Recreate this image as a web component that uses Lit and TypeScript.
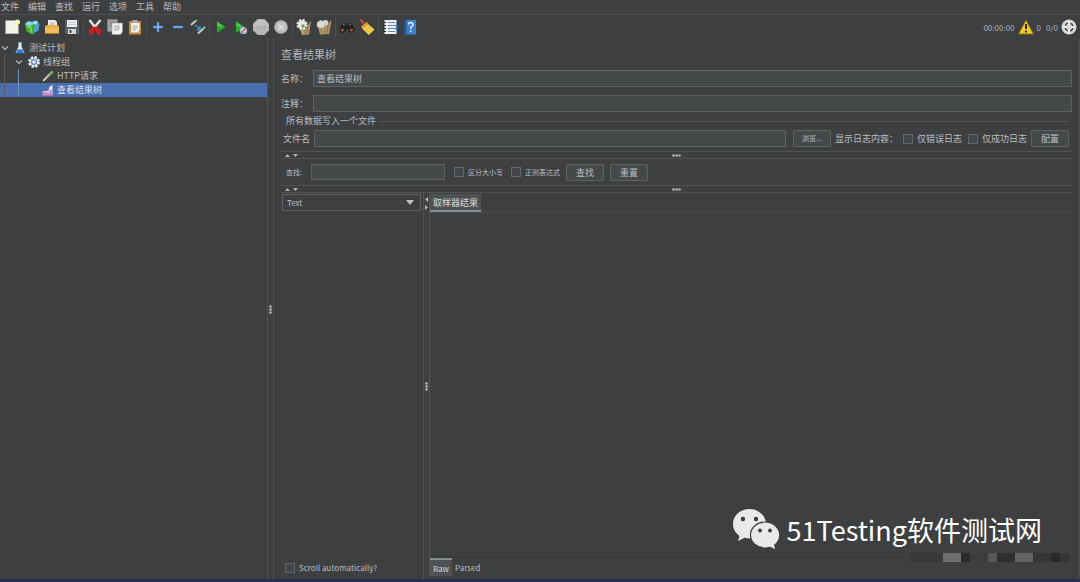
import { LitElement, html, css, svg, nothing } from "lit";
import { customElement } from "lit/decorators.js";
import { classMap } from "lit/directives/class-map.js";

const icons: Record<string, unknown> = {
  new: svg`<path d="M1.5 1.5h13v13.5h-13z" fill="#f1f2e8"/><path d="M1.5 14h13v1h-13z" fill="#b9bbae"/><circle cx="13.5" cy="3" r="2.6" fill="#f4f29a"/><circle cx="13.5" cy="3" r="1" fill="#fff"/>`,
  templates: svg`<path d="M6 3l6-1.500L15.500 5l-1 6.500L8 15.500z" fill="#4aa3dc"/><path d="M8 4q3-3.500 6.500-1L11 6z" fill="#a8def6"/><path d="M1 5.500L5 4l6 1.500-1 8.500-2 1.500-5.500-3z" fill="#43ae35"/><path d="M1 5.500q2-4 6-3l2 3-3 1.500z" fill="#8ad7ee"/><path d="M3 7l4 1.500v5" fill="none" stroke="#85dc62" stroke-width="1.500"/>`,
  open: svg`<path d="M4 1h7l2 2v6H4z" fill="#eceded"/><path d="M6 4h5M6 6h5" stroke="#aaa"/><path d="M1 7l2-1h11l1 2v6.500H1z" fill="#e9b04a"/><path d="M1 9h14v5.500H1z" fill="#f0bd5e"/><path d="M1 14h14v1H1z" fill="#b57b21"/>`,
  save: svg`<path d="M1 1h14v14H2.500L1 13.500z" fill="#5b6066"/><path d="M3 1h10v7H3z" fill="#eceeef"/><path d="M4 3.500h8M4 5.500h8" stroke="#c9ccd0"/><path d="M4 10h8v5H4z" fill="#d5d8db"/><path d="M5.500 11h2v3h-2z" fill="#44484c"/>`,
  cut: svg`<path d="M2.500 1l7 9M13.500 1L6 10" stroke="#e4e6e8" stroke-width="2.400"/><path d="M7 8.500L3 11v2.500l1.500 1L8 9l3.500 5.500 1.500-1V11L9 8.500" fill="none" stroke="#d3201b" stroke-width="2.200"/>`,
  copy: svg`<path d="M.5.500h10v12H.5z" fill="#a5a7a8" stroke="#777"/><path d="M2.500 3h6M2.500 5h4M2.500 7h3" stroke="#777"/><path d="M5 4h10.500v9l-2 2.500H5z" fill="#f3f4f2" stroke="#9a9c9a" stroke-width=".6"/><path d="M7 7h6M7 9h6M7 11h5" stroke="#a3a6a3"/>`,
  paste: svg`<path d="M2 2h12v13.500H2z" fill="#c58a35"/><path d="M4 4h8.500v9.500H4z" fill="#f4f4ef"/><path d="M5.500 1h5v3h-5z" fill="#a8adb2"/><path d="M5.500 7h5M5.500 9h5M5.500 11h3" stroke="#a1a39e"/><path d="M10 13.500l2.500-2.500v2.500z" fill="#999"/>`,
  plus: svg`<path d="M8 3v10M3 8h10" stroke="#3d79cc" stroke-width="2.600"/><path d="M8 3.500v9M3.500 8h9" stroke="#a9cdf8" stroke-width="1"/>`,
  minus: svg`<path d="M3 8h10" stroke="#3d79cc" stroke-width="2.600"/><path d="M3.500 8h9" stroke="#a9cdf8" stroke-width="1"/>`,
  toggle: svg`<path d="M1 6l5-4.500" stroke="#c8ccc8" stroke-width="2"/><path d="M5 2.500l2-1.500" stroke="#75b85f" stroke-width="2"/><path d="M8 14.500L15 8" stroke="#c8ccc8" stroke-width="2"/><path d="M13 10l2-2" stroke="#75b85f" stroke-width="2"/><path d="M5 6l5 4M10 7v3.500H7" stroke="#4a8fe0" stroke-width="1.300" fill="none"/>`,
  play: svg`<path d="M4 2l8.500 6L4 14z" fill="#2fa62f"/><path d="M4.500 3l6 4.500h-6z" fill="#55c94e"/>`,
  playTimers: svg`<path d="M3 2l9 6.500L3 14z" fill="#2fa62f"/><path d="M3.500 3l6 4.500h-6z" fill="#55c94e"/><circle cx="10.500" cy="11.500" r="3.600" fill="#e9f1fa"/><circle cx="10.500" cy="11.500" r="2.700" fill="none" stroke="#5c93cf"/><path d="M8.500 13.500l4.500-4.500" stroke="#d4452f" stroke-width="1.300"/>`,
  stop: svg`<path d="M4.700 0h6.600L16 4.700v6.600L11.300 16H4.700L0 11.300V4.700z" fill="#b5b7b7"/><path d="M5 1h6l4 4v3H1V5z" fill="#bfc1c1"/><path d="M3 8h10" stroke="#adafaf" stroke-width="2.500"/>`,
  shutdown: svg`<circle cx="8" cy="8" r="6.800" fill="#b8baba"/><circle cx="8" cy="8" r="4.500" fill="#c0c2c2"/><path d="M5.500 5.500l5 5M10.500 5.500l-5 5" stroke="#dcdddd" stroke-width="1.600"/>`,
  clear: svg`<path d="M4 10l6-1 5-7.500-1 7.500-1 6.500-7 .5z" fill="#b89a6b"/><path d="M8 9l1 6M11 8v7M13 5l-2 8" stroke="#8a6c42" stroke-width=".8"/><circle cx="6" cy="5.500" r="4.600" fill="none" stroke="#e6e8e4" stroke-width="2" stroke-dasharray="2.300 1.310"/><circle cx="6" cy="5.500" r="4.200" fill="#e6e8e4"/><circle cx="7" cy="7" r="1.700" fill="#68a64f"/>`,
  clearAll: svg`<circle cx="5" cy="5.500" r="3.600" fill="#d9dbd7" stroke="#e9e9e5" stroke-width="1.500" stroke-dasharray="2 1"/><circle cx="9.500" cy="4" r="3" fill="#cfd1cd"/><path d="M2 8l5 1 3-3 1 2 4-7 .5 1-1.500 7-1 6-9 .5z" fill="#b89a6b"/><path d="M5 10l1 5M8 9l1 6M11 8v7M13 5l-2 8" stroke="#8a6c42" stroke-width=".8"/>`,
  search: svg`<path d="M3 4h3l2 2 2-2h3l2.500 7-4 2-3-4-3.500 4-4.500-2z" fill="#232425"/><circle cx="3.500" cy="11" r="2.700" fill="#1d1e1f"/><circle cx="12.500" cy="11" r="2.700" fill="#1d1e1f"/><circle cx="3.500" cy="11" r="1.500" fill="#b25a2d"/><circle cx="12.500" cy="11" r="1.500" fill="#b25a2d"/><path d="M4 5l1.500 1M10.500 6L12 5" stroke="#9ea0a1"/>`,
  broom: svg`<path d="M1.500 0.500l3.500 4" stroke="#d6483c" stroke-width="2.200"/><path d="M2 7.500l6-4.500 2 3-6 4.500z" fill="#e0a233"/><path d="M3.500 10L9.500 5.500l6 5-5.500 5.500z" fill="#f3d14c"/><path d="M6.500 10l4.500 4M9 8l4.500 4" stroke="#d9ae30"/>`,
  functions: svg`<path d="M2.500 1h12v14h-12z" fill="#f0f3f6"/><path d="M6 3.500h7M6 6.500h8M6 9.500h8M6 12.500h7" stroke="#6583aa"/><path d="M1 3.500h3M1 6.500h3M1 9.500h3M1 12.500h3" stroke="#222"/><path d="M14.500 4v8" stroke="#3d87d8" stroke-width="1.500"/>`,
  help: svg`<path d="M2 1h12v14.500H2z" fill="#3f82cf"/><path d="M2 1h2.500v14.500H2z" fill="#24568f"/><path d="M6.500 5.500q0-2 2.200-2t2.200 2q0 1.300-1.200 2T8.700 10M8.700 11.500v1.500" fill="none" stroke="#f2f7fd" stroke-width="1.300"/>`,
  flask: svg`<path d="M6 1h4v5l4 8.500H2L6 6z" fill="#e6edf2"/><path d="M5 9.500h6l2.500 5.500h-11z" fill="#2e82d6"/><path d="M5.500 1h5" stroke="#9fb0bd" stroke-width="1.500"/>`,
  gear: svg`<circle cx="8" cy="8" r="6.600" fill="none" stroke="#edf0f3" stroke-width="2.600" stroke-dasharray="3.200 1.980"/><circle cx="8" cy="8" r="5.800" fill="#e2e8ee"/><circle cx="8" cy="8" r="3.200" fill="#e9eef4" stroke="#4f82c2" stroke-width="1.600"/>`,
  dropper: svg`<path d="M1.500 14.500L9 7.500" stroke="#e2e4e2" stroke-width="2"/><path d="M6 10l5-5" stroke="#b0b4b0" stroke-width="3"/><path d="M10 6l4.500-4" stroke="#6bb456" stroke-width="3.500"/>`,
  graph: svg`<path d="M1 15V10l5-1 2 1 2-6 4-3v14z" fill="#f1e8f2"/><path d="M1 15v-3.500l4-1.500 3 2 6-3v6z" fill="#dc82c4"/><path d="M6 9l8 3V7z" fill="#8fb4e0"/>`,
  warn: svg`<path d="M8 1L15.500 15H.5z" fill="#f3cf24" stroke="#806d18"/><path d="M8 5v5M8 11.500v2" stroke="#2d2810" stroke-width="2"/>`,
  expand: svg`<circle cx="8" cy="8" r="7.500" fill="#d7d9d9"/><circle cx="8" cy="8" r="4" fill="none" stroke="#4c4f51" stroke-width="1.500" stroke-dasharray="4.200 2.080" stroke-dashoffset="-1"/><path d="M8 2v4M8 10v4M2 8h4M10 8h4" stroke="#f6f7f7" stroke-width="1.600"/>`,
};

const icon = (name: string, size = 16) =>
  html`<svg class="icon" viewBox="0 0 16 16" width=${size} height=${size} aria-hidden="true">${icons[name]}</svg>`;

const menus = ["文件", "编辑", "查找", "运行", "选项", "工具", "帮助"];

const tools: [string, string][][] = [
  [["new", "新建"], ["templates", "模板"], ["open", "打开"], ["save", "保存"]],
  [["cut", "剪切"], ["copy", "复制"], ["paste", "粘贴"]],
  [["plus", "展开"], ["minus", "折叠"], ["toggle", "切换"]],
  [["play", "启动"], ["playTimers", "不停顿启动"], ["stop", "停止"], ["shutdown", "关闭"]],
  [["clear", "清除"], ["clearAll", "清除全部"]],
  [["search", "查找"], ["broom", "重置查找"]],
  [["functions", "函数助手"], ["help", "帮助"]],
];

const nodes = [
  { level: 0, icon: "flask", label: "测试计划", open: true, selected: false },
  { level: 1, icon: "gear", label: "线程组", open: true, selected: false },
  { level: 2, icon: "dropper", label: "HTTP请求", open: false, selected: false },
  { level: 2, icon: "graph", label: "查看结果树", open: false, selected: true },
];

const sharedStyles = css`
  * { box-sizing: border-box; }
  button, input, select { font: inherit; color: inherit; margin: 0; padding: 0; border-radius: 0; outline: none; }
  button { background: none; border: 0; white-space: nowrap; }
  .icon { display: block; flex: none; }
`;

@customElement("menu-and-tools")
class MenuAndTools extends LitElement {
  static styles = [sharedStyles, css`
    :host { display: block; }
    .menu { display: flex; gap: 9px; height: 15px; padding-left: 1px; border-bottom: 1px solid #4c4e50; }
    .menu button { line-height: 14px; }
    .bar { display: flex; align-items: center; height: 24px; padding-left: 2px; }
    .group { display: flex; }
    .group + .group { margin-left: 1px; padding-left: 1px; border-left: 1px solid #4c4e50; }
    .tool { width: 20px; height: 20px; display: grid; place-items: center; }
    .status { display: flex; align-items: center; gap: 3px; margin-left: auto; padding-right: 3px; font-size: 8px; color: #aeb0b2; }
    .counts { display: flex; gap: 5px; }
  `];

  render() {
    return html`
      <nav class="menu">${menus.map((m) => html`<button>${m}</button>`)}</nav>
      <div class="bar">
        ${tools.map((group) => html`<div class="group">
          ${group.map(([name, label]) => html`<button class="tool" aria-label=${label}>${icon(name)}</button>`)}
        </div>`)}
        <div class="status">
          <span>00:00:00</span>${icon("warn")}
          <span class="counts"><span>0</span><span>0/0</span></span>${icon("expand")}
        </div>
      </div>`;
  }
}

@customElement("plan-tree")
class PlanTree extends LitElement {
  static styles = [sharedStyles, css`
    :host { display: block; }
    .tree { list-style: none; margin: 0; padding: 2px 0 0; }
    .row { display: flex; align-items: center; height: 14px; }
    .selected { background: #4b6eaf; color: #dfe3ea; }
    .guide { flex: none; width: 14px; height: 14px; }
    .outer { background: linear-gradient(#5a5d5f, #5a5d5f) 4px 0 / 1px 100% no-repeat; }
    .inner { background: linear-gradient(#6a93b8, #6a93b8) 4px 0 / 1px 100% no-repeat; }
    .arrow { flex: none; width: 14px; padding-left: 1px; }
    .label { padding-left: 3px; line-height: 14px; }
  `];

  render() {
    return html`<ul class="tree" role="tree">
      ${nodes.map((n) => html`<li class=${classMap({ row: true, selected: n.selected })} role="treeitem" aria-level=${n.level + 1}>
        ${n.level > 0 ? html`<span class="guide outer"></span>` : nothing}
        ${n.level > 1 ? html`<span class="guide inner"></span>` : nothing}
        <span class="arrow">${n.open
          ? html`<svg class="icon" width="8" height="8" viewBox="0 0 8 8"><path d="M1 2.500l3 3 3-3" fill="none" stroke="#b5b7b9" stroke-width="1.200"/></svg>`
          : nothing}</span>
        ${icon(n.icon, 12)}<span class="label">${n.label}</span>
      </li>`)}
    </ul>`;
  }
}

@customElement("split-bar")
class SplitBar extends LitElement {
  static properties = { vertical: { type: Boolean, reflect: true }, arrows: { type: Boolean } };
  declare vertical: boolean;
  declare arrows: boolean;

  static styles = css`
    :host { display: grid; grid-template-columns: 1fr auto 1fr; align-items: center; height: 8px; border: solid #505355; border-width: 1px 0; box-sizing: border-box; }
    :host([vertical]) { grid-template: 1fr auto 1fr / 1fr; justify-items: center; align-items: start; width: 7px; height: auto; border-width: 0 1px; }
    svg { display: block; fill: #b4b6b7; }
  `;

  render() {
    const turned = this.vertical;
    const arrows = turned
      ? html`<svg width="5" height="18" viewBox="0 0 5 18"><path d="M4 4v5L1 6.500zM1 12v5l3-2.500z"/></svg>`
      : html`<svg width="18" height="4" viewBox="0 0 18 4"><path d="M4 4h5L6.500 1zM12 1h5l-2.500 3z"/></svg>`;
    const dots = turned
      ? html`<svg width="3" height="9" viewBox="0 0 3 9"><circle cx="1.500" cy="1.500" r="1.300"/><circle cx="1.500" cy="4.500" r="1.300"/><circle cx="1.500" cy="7.500" r="1.300"/></svg>`
      : html`<svg width="9" height="3" viewBox="0 0 9 3"><circle cx="1.500" cy="1.500" r="1.300"/><circle cx="4.500" cy="1.500" r="1.300"/><circle cx="7.500" cy="1.500" r="1.300"/></svg>`;
    return html`<span>${this.arrows ? arrows : nothing}</span>${dots}<span></span>`;
  }
}

@customElement("results-panel")
class ResultsPanel extends LitElement {
  static styles = [sharedStyles, css`
    :host { display: flex; flex-direction: column; min-width: 0; padding-left: 7px; border-right: 1px solid #4c4e50; }
    .title { margin: 0; padding-top: 7px; height: 31px; font-size: 11px; font-weight: 400; line-height: 17px; color: #b4b6b8; }
    .field { display: grid; grid-template-columns: 32px 1fr; align-items: center; height: 17px; margin: 0 7px 8px 0; }
    .last { margin-bottom: 0; }
    .text { width: 100%; min-width: 0; height: 17px; padding: 0 3px; border: 1px solid #5e6162; background: #45494a; }
    .file { border: 0; margin: 0 7px 0 0; padding: 0 3px 4px 2px; min-width: 0; }
    .legend { display: flex; align-items: center; gap: 3px; width: 100%; height: 18px; padding: 0 0 0 3px; line-height: 18px; }
    .legend::after { content: ""; flex: 1; height: 1px; background: #505355; }
    .line { display: flex; align-items: center; height: 17px; }
    .line .text { flex: 1; margin: 0 7px 0 4px; }
    .push { height: 17px; width: 38px; border: 1px solid #5e6162; border-radius: 1px; background: #45494a; line-height: 15px; }
    .small { font-size: 7px; }
    .logs { margin: 0 5px 0 4px; }
    .check { display: flex; align-items: center; gap: 4px; white-space: nowrap; }
    .box { appearance: none; width: 10px; height: 10px; border: 1px solid #64686a; background: #424648; }
    .box:checked { background: #4b6eaf; }
    .line .check { margin-right: 6px; }
    .line .check:last-of-type { margin-right: 4px; }
    .bar { margin-right: 7px; }
    .search { display: flex; align-items: center; height: 26px; padding: 0 5px; }
    .search .text { width: 134px; height: 16px; margin: 0 9px; }
    .search .check { margin-right: 8px; }
    .search .check:last-of-type { margin-right: 6px; }
    .search .push + .push { margin-left: 6px; }
    .results { flex: 1; display: grid; grid-template-columns: 142px 7px 1fr; min-height: 0; }
    .list { display: flex; flex-direction: column; justify-content: space-between; padding: 1px 2px 5px 1px; }
    .combo { display: grid; align-items: center; grid-template-columns: 1fr 14px; height: 17px; border: 1px solid #5e6162; }
    .combo select { grid-area: 1 / 1 / 2 / 3; appearance: none; height: 15px; padding-left: 4px; border: 0; background: transparent; font-size: 8px; }
    .combo svg { grid-area: 1 / 2; pointer-events: none; }
    .scroll { padding-left: 3px; font-size: 8px; }
    .view { display: flex; flex-direction: column; justify-content: space-between; min-width: 0; padding: 1px 7px 3px 0; }
    .tabs { display: flex; border-bottom: 1px solid #47494b; }
    .tab { height: 18px; padding: 0 3px; }
    .on { background: #4e5254; color: #dadcdd; border-bottom: 2px solid #8a8f92; }
    .bottom { border-bottom: 0; border-top: 1px solid #37383a; font-size: 8px; }
    .bottom .on { border-bottom: 0; border-top: 2px solid #8a8f92; }
  `];

  private check(id: string, text: string, extra = "") {
    return html`<label class="check ${extra}" for=${id}><input class="box" type="checkbox" id=${id} />${text}</label>`;
  }

  render() {
    return html`
      <h1 class="title">查看结果树</h1>
      <div class="field"><label for="name">名称：</label><input class="text" id="name" value="查看结果树" /></div>
      <div class="field last"><label for="comment">注释：</label><input class="text" id="comment" /></div>
      <fieldset class="file">
        <legend class="legend">所有数据写入一个文件</legend>
        <div class="line">
          <label for="file">文件名</label><input class="text" id="file" />
          <button class="push small">浏览...</button>
          <span class="logs">显示日志内容：</span>
          ${this.check("errors", "仅错误日志")}
          ${this.check("success", "仅成功日志")}
          <button class="push">配置</button>
        </div>
      </fieldset>
      <split-bar class="bar" arrows></split-bar>
      <div class="search">
        <label class="small" for="query">查找:</label><input class="text" id="query" />
        ${this.check("case", "区分大小写", "small")}
        ${this.check("regex", "正则表达式", "small")}
        <button class="push">查找</button><button class="push">重置</button>
      </div>
      <split-bar class="bar" arrows></split-bar>
      <div class="results">
        <div class="list">
          <div class="combo">
            <select aria-label="Renderer"><option>Text</option></select>
            <svg width="8" height="5" viewBox="0 0 8 5"><path d="M0 0h8L4 5z" fill="#bfc1c2"/></svg>
          </div>
          ${this.check("auto", "Scroll automatically?", "scroll")}
        </div>
        <split-bar vertical arrows></split-bar>
        <div class="view">
          <div class="tabs"><button class="tab on">取样器结果</button></div>
          <div class="tabs bottom"><button class="tab on">Raw</button><button class="tab">Parsed</button></div>
        </div>
      </div>`;
  }
}

const mosaic: [number, number, string][] = [
  [0, 33, "#38393b"], [33, 18, "#6d6e70"], [51, 9, "#2a2b2d"], [60, 18, "#3b3c3e"], [78, 9, "#555658"],
  [87, 18, "#2e2f31"], [105, 18, "#616264"], [123, 18, "#353638"], [141, 9, "#282a2c"], [150, 9, "#343537"],
];

@customElement("app-root")
class AppRoot extends LitElement {
  static styles = [sharedStyles, css`
    :host {
      position: relative; display: grid; grid-template-rows: auto 1fr; height: 100vh; overflow: hidden;
      background: #3e3f41; color: #bcbec0; border-bottom: 3px solid #29324d; box-sizing: border-box;
      font: 9px/13px "Noto Sans CJK SC", sans-serif;
    }
    .main { display: grid; grid-template-columns: 267px 7px 1fr; min-height: 0; }
    .mark { position: absolute; right: 38px; bottom: 29px; display: flex; align-items: center; gap: 7px; color: #fff; font-size: 27px; line-height: 40px; white-space: nowrap; }
    .mosaic { position: absolute; right: 11px; bottom: 17px; display: block; }
  `];

  render() {
    return html`
      <menu-and-tools></menu-and-tools>
      <main class="main">
        <plan-tree></plan-tree>
        <split-bar vertical></split-bar>
        <results-panel></results-panel>
      </main>
      <svg class="mosaic" width="159" height="9" viewBox="0 0 159 9" aria-hidden="true">
        ${mosaic.map(([x, w, c]) => svg`<rect x=${x} y="0" width=${w} height="9" fill=${c}/>`)}
      </svg>
      <div class="mark">
        <svg width="47" height="41" viewBox="0 0 47 41" aria-hidden="true">
          <path d="M16.500 0C7.400 0 0 6.500 0 15c0 5 2.500 9 6.500 12L5 32l6.500-3.200c1.700.5 3.500.7 5.500.7C26 29.500 33 23 33 15S25.600 0 16.500 0z" fill="#e9e9e9"/>
          <path d="M32 13c-8 0-14.500 5.700-14.500 13S24 39 32 39c1.800 0 3.500-.3 5-.7l6 2.700-1.300-5c3-2.400 5-6 5-10C46.700 18.700 40 13 32 13z" fill="#e9e9e9" stroke="#3e3f41" stroke-width="1.200"/>
          <g fill="#3a3b3d"><circle cx="10" cy="10" r="2.200"/><circle cx="23" cy="10" r="2.200"/><circle cx="27" cy="21.500" r="1.900"/><circle cx="37" cy="21.500" r="1.900"/></g>
        </svg>
        <span>51Testing软件测试网</span>
      </div>`;
  }
}
